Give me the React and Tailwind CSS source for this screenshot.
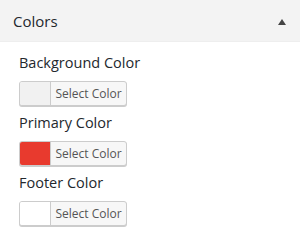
const colors = [
  { label: 'Background Color', swatch: 'bg-[#f1f1f1]' },
  { label: 'Primary Color', swatch: 'bg-[#e83a2e]' },
  { label: 'Footer Color', swatch: 'bg-white' },
];

const ColorPicker = ({ swatch }) => (
  <button
    type="button"
    className="flex h-[25px] w-[108px] overflow-hidden rounded-[3px] border border-[#cccccc] bg-[#f7f7f7] p-0 shadow-[0_1px_0_#cccccc]"
  >
    <span className={`h-full w-[31px] border-r border-[#cccccc] ${swatch}`} />
    <span className="flex-1 text-center text-[12px] leading-[23px] text-[#555555]">
      Select Color
    </span>
  </button>
);

export default function App() {
  return (
    <div className="h-[241px] w-[300px] bg-white font-['Open_Sans',sans-serif]">
      <div className="flex h-[42px] items-center justify-between border-b border-[#eeeeee] bg-[#f3f3f3] pl-[13px] pr-[14px]">
        <h3 className="text-[15px] leading-5 text-[#23282d]">Colors</h3>
        <svg width="8" height="6" viewBox="0 0 8 6" className="mt-[2px]">
          <polygon points="4,0 8,6 0,6" fill="#444" />
        </svg>
      </div>

      <div className="flex flex-col gap-[7px] px-[19px] pt-[11px]">
        {colors.map((c) => (
          <div key={c.label}>
            <div className="mb-2 text-[14.5px] leading-5 text-[#23282d]">{c.label}</div>
            <ColorPicker swatch={c.swatch} />
          </div>
        ))}
      </div>
    </div>
  );
}
